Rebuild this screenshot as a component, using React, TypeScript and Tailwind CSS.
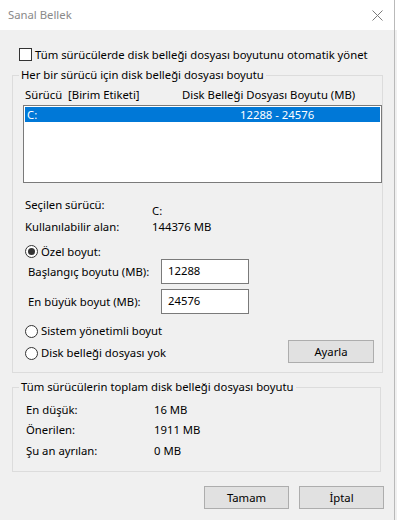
import React from "react";

const Radio = ({ checked }: { checked?: boolean }) => (
  <span className="w-[13px] h-[13px] rounded-full border border-[#333333] bg-white flex items-center justify-center shrink-0">
    {checked && <span className="w-[7px] h-[7px] rounded-full bg-[#333333]" />}
  </span>
);

const Btn = ({ children, w }: { children: React.ReactNode; w: string }) => (
  <div className={`${w} h-[23px] bg-[#e1e1e1] border border-[#adadad] flex items-center justify-center text-black`}>
    {children}
  </div>
);

export default function App() {
  return (
    <div
      className="flex w-[397px] h-[520px] overflow-hidden text-[11.3px] leading-[16px] text-black"
      style={{ fontFamily: '"Noto Sans", sans-serif' }}
    >
      <div className="w-[394px] flex flex-col">
        <div className="h-[30px] bg-white flex items-center justify-between pl-[8px] pr-[10px]">
          <span className="text-[#8a8a8a]">Sanal Bellek</span>
          <svg width="11" height="11" viewBox="0 0 11 11" className="mr-[1px]">
            <line x1="0.5" y1="0.5" x2="10.5" y2="10.5" stroke="#7a7a7a" strokeWidth="1" />
            <line x1="10.5" y1="0.5" x2="0.5" y2="10.5" stroke="#7a7a7a" strokeWidth="1" />
          </svg>
        </div>
        <div className="flex-1 bg-[#f0f0f0] flex flex-col">
          <div className="mt-[16px] ml-[19px] h-[17px] flex items-center gap-[3px]">
            <span className="w-[13px] h-[13px] border border-[#333333] bg-white shrink-0" />
            <span>Tüm sürücülerde disk belleği dosyası boyutunu otomatik yönet</span>
          </div>

          <fieldset className="mt-[4px] ml-[12px] w-[369px] border border-[#dcdcdc] pb-[9px]">
            <legend className="ml-[6px] px-[2px] h-[16px]">Her bir sürücü için disk belleği dosyası boyutu</legend>
            <div className="mt-[4px] h-[16px] pl-[12px] flex">
              <span className="w-[157px]">Sürücü&nbsp; [Birim Etiketi]</span>
              <span>Disk Belleği Dosyası Boyutu (MB)</span>
            </div>
            <div className="mt-[2px] ml-[10px] w-[359px] h-[78px] border border-[#7a7a7a] bg-white p-[1px]">
              <div className="h-[15px] bg-[#0078d7] text-white flex items-center pl-[2px]">
                <span className="w-[213px]">C:</span>
                <span>12288 - 24576</span>
              </div>
            </div>
            <div className="mt-[14px] pl-[12px] flex items-start">
              <span className="w-[127px] h-[16px]">Seçilen sürücü:</span>
              <span className="mt-[6px] h-[16px]">C:</span>
            </div>
            <div className="pl-[12px] h-[16px] flex">
              <span className="w-[127px]">Kullanılabilir alan:</span>
              <span>144376 MB</span>
            </div>
            <div className="mt-[9px] pl-[12px] h-[15px] flex items-center gap-[3px]">
              <Radio checked />
              <span>Özel boyut:</span>
            </div>
            <div className="pl-[15px] h-[25px] flex items-center">
              <span className="w-[133px]">Başlangıç boyutu (MB):</span>
              <div className="w-[88px] h-[25px] border border-[#7a7a7a] bg-white pl-[6px] pt-[3px]">12288</div>
            </div>
            <div className="mt-[5px] pl-[15px] h-[25px] flex items-center">
              <span className="w-[133px]">En büyük boyut (MB):</span>
              <div className="w-[88px] h-[25px] border border-[#7a7a7a] bg-white pl-[6px] pt-[3px]">24576</div>
            </div>
            <div className="mt-[9px] pl-[12px] h-[16px] flex items-center gap-[3px]">
              <Radio />
              <span>Sistem yönetimli boyut</span>
            </div>
            <div className="mt-[1px] pl-[12px] pr-[8px] flex items-start justify-between">
              <div className="mt-[5px] h-[16px] flex items-center gap-[3px]">
                <Radio />
                <span>Disk belleği dosyası yok</span>
              </div>
              <Btn w="w-[86px]">Ayarla</Btn>
            </div>
          </fieldset>

          <fieldset className="mt-[6px] ml-[12px] w-[369px] border border-[#dcdcdc] pb-[12px]">
            <legend className="ml-[6px] px-[2px] h-[16px]">Tüm sürücülerin toplam disk belleği dosyası boyutu</legend>
            <div className="mt-[7px] pl-[13px] h-[16px] flex">
              <span className="w-[128px]">En düşük:</span>
              <span>16 MB</span>
            </div>
            <div className="mt-[4px] pl-[13px] h-[16px] flex">
              <span className="w-[128px]">Önerilen:</span>
              <span>1911 MB</span>
            </div>
            <div className="mt-[5px] pl-[13px] h-[16px] flex">
              <span className="w-[128px]">Şu an ayrılan:</span>
              <span>0 MB</span>
            </div>
          </fieldset>

          <div className="mt-[14px] mr-[10px] flex justify-end gap-[10px]">
            <Btn w="w-[85px]">Tamam</Btn>
            <Btn w="w-[85px]">İptal</Btn>
          </div>
        </div>
      </div>
      <div className="w-px bg-[#b9b9b9]" />
      <div className="flex-1 flex flex-col">
        <div className="h-[30px] bg-white" />
        <div className="flex-1 bg-[#f0f0f0]" />
      </div>
    </div>
  );
}
